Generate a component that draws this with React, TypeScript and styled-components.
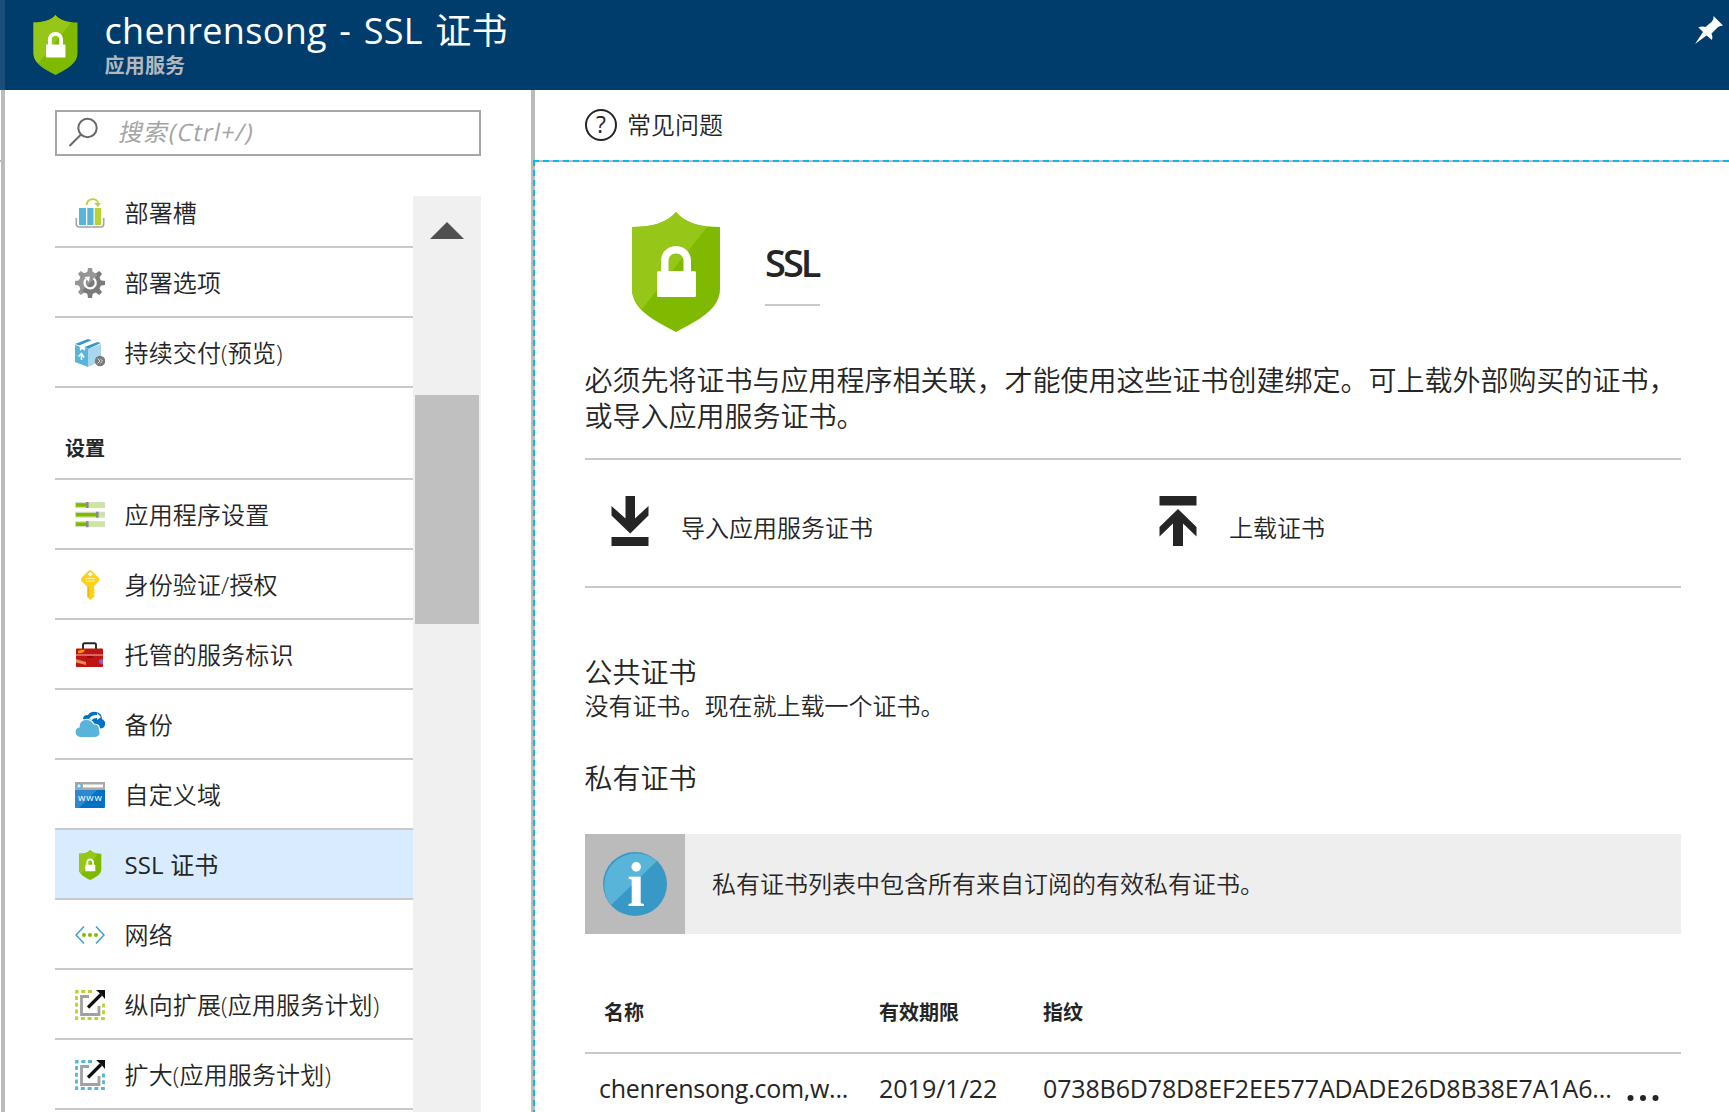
import React from "react";
import styled, { createGlobalStyle, css } from "styled-components";

const line = "#c9c9c9";
const ink = "#252525";

const GlobalStyle = createGlobalStyle`
  * { box-sizing: border-box; }
  html, body { margin: 0; padding: 0; }
  body {
    width: 1729px;
    height: 1112px;
    overflow: hidden;
    background: #fff;
    color: ${ink};
    font-family: "Open Sans", "Noto Sans CJK SC", sans-serif;
    font-size: 24px;
    font-weight: 350;
  }
  svg { display: block; flex: none; }
`;

const Page = styled.div`
  display: flex;
  flex-direction: column;
  width: 1729px;
  height: 1112px;
  overflow: hidden;
`;

const Header = styled.header`
  display: flex;
  flex: none;
  height: 90px;
  padding: 15px 6px 0 28px;
  border-left: 5px solid #1b4f7b;
  background: #003d6c;
`;

const Titles = styled.div`
  flex: 1;
  padding-left: 26.5px;
  margin-top: -15px;
`;

const Title = styled.h1`
  margin: 0;
  padding-top: 7px;
  height: 55px;
  line-height: 48px;
  font-size: 36px;
  font-weight: 400;
  letter-spacing: 0.3px;
  word-spacing: 2.8px;
  color: #fff;
  white-space: nowrap;
`;

const Subtitle = styled.div`
  line-height: 22px;
  font-size: 20px;
  font-weight: 700;
  letter-spacing: 0.2px;
  color: #b4b8bc;
`;

const PinButton = styled.button`
  display: flex;
  height: 30px;
  padding: 1px 0 0;
  border: 0;
  background: none;
`;

const Body = styled.div`
  display: flex;
  flex: 1;
  min-height: 0;
`;

const Edge = styled.div`
  width: 1px;
  height: 2px;
  margin-top: 70px;
  background: #bbb;
`;

const Sidebar = styled.nav`
  display: flex;
  flex-direction: column;
  flex: none;
  width: 534px;
  border-left: 4px solid #bbb;
  border-right: 4px solid #bbb;
  padding: 20px 50px 0 50px;
`;

const Search = styled.label`
  display: flex;
  align-items: center;
  gap: 22px;
  height: 46px;
  padding-left: 11px;
  border: 2px solid #a6a6a6;
`;

const SearchInput = styled.input`
  flex: 1;
  width: 0;
  height: 40px;
  margin-top: -5px;
  padding: 0;
  border: 0;
  outline: 0;
  background: none;
  font: 400 24px/38px "Open Sans", "Noto Sans CJK SC", sans-serif;
  letter-spacing: 1px;
  transform: skewX(-12deg);
  &::placeholder { color: #a4a4a4; opacity: 1; }
`;

const MenuArea = styled.div`
  display: flex;
  flex: 1;
  min-height: 0;
`;

const Menu = styled.ul`
  flex: 1;
  margin: 22px 0 0;
  padding: 0;
  list-style: none;
`;

const MenuItem = styled.li<{ $active?: boolean }>`
  display: flex;
  align-items: center;
  gap: 19.5px;
  height: 70px;
  padding: 2px 0 0 20px;
  border-bottom: 2px solid ${line};
  line-height: 36px;
  letter-spacing: 0.15px;
  white-space: nowrap;
  ${(p) => p.$active && css`
    background: #d9ecff;
    font-weight: 400;
  `}
`;

const MenuHeading = styled.li`
  height: 92px;
  padding: 48px 0 0 10px;
  border-bottom: 2px solid ${line};
  line-height: 26px;
  font-size: 20px;
  font-weight: 700;
`;

const ScrollTrack = styled.div`
  width: 68px;
  margin-top: 40px;
  padding: 26px 2px 0;
  background: #f0f0f0;
`;

const ScrollUp = styled.div`
  width: 0;
  height: 0;
  margin: 0 auto;
  border: 17px solid transparent;
  border-top: 0;
  border-bottom-color: #505050;
`;

const ScrollThumb = styled.div`
  height: 229px;
  margin-top: 156px;
  background: #c0c0c0;
`;

const Main = styled.main`
  display: flex;
  flex-direction: column;
  flex: 1;
  min-width: 0;
`;

const Toolbar = styled.div`
  display: flex;
  align-items: center;
  gap: 10px;
  flex: none;
  height: 70px;
  padding: 0 0 0 50px;
  line-height: 36px;
`;

const Blade = styled.section`
  position: relative;
  flex: 1;
  padding: 50px 48px 0 50px;
  border-top: 2px solid #bbb;
`;

const DashTop = styled.div`
  position: absolute;
  top: -2px;
  left: -2px;
  right: 0;
  height: 2px;
  background: repeating-linear-gradient(90deg, #00bcf2 0 6px, transparent 6px 10px);
`;

const DashLeft = styled.div`
  position: absolute;
  top: -2px;
  left: -2px;
  bottom: 0;
  width: 2px;
  background: repeating-linear-gradient(180deg, #00bcf2 0 6px, transparent 6px 10px);
`;

const Hero = styled.div`
  display: flex;
  gap: 44px;
  height: 120px;
  padding-left: 46px;
`;

const HeroTitle = styled.h2`
  width: 55px;
  height: 94px;
  margin: 0;
  padding-top: 26px;
  border-bottom: 2px solid ${line};
  line-height: 48px;
  font-size: 38px;
  font-weight: 600;
  letter-spacing: -3px;
`;

const Intro = styled.p`
  height: 96px;
  margin: 30px -10px 0 -0.5px;
  line-height: 36px;
  font-size: 28px;
`;

const Actions = styled.div`
  display: grid;
  grid-template-columns: 1fr 1fr;
  height: 130px;
  border: solid ${line};
  border-width: 2px 0;
`;

const Action = styled.div`
  display: flex;
  gap: 32px;
  padding: 36px 0 0 26px;
  line-height: 36px;
`;

const ActionLabel = styled.span`
  margin-top: 14px;
`;

const Group = styled.section<{ $gap: number }>`
  margin-top: ${(p) => p.$gap}px;
`;

const GroupTitle = styled.h3`
  margin: 0 0 0 -0.5px;
  line-height: 36px;
  font-size: 28px;
  font-weight: 350;
`;

const GroupText = styled.p`
  margin: 0 0 0 -0.5px;
  line-height: 32px;
`;

const Notice = styled.div`
  display: flex;
  height: 100px;
  margin-top: 38px;
  background: #eee;
`;

const NoticeIcon = styled.div`
  width: 100px;
  background: #bbb;
`;

const NoticeText = styled.p`
  margin: 0 0 0 27px;
  line-height: 100px;
`;

const Row = styled.div<{ $head?: boolean }>`
  display: grid;
  grid-template-columns: 294px 164px 1fr 54px;
  white-space: nowrap;
  ${(p) =>
    p.$head
      ? css`
          height: 82px;
          margin-top: 38px;
          border-bottom: 2px solid ${line};
          line-height: 82px;
          font-size: 20px;
          font-weight: 700;
        `
      : css`
          height: 68px;
          line-height: 68px;
          font-size: 25px;
          font-weight: 400;
        `}
`;

const Cell = styled.span<{ $indent?: number; $track?: number }>`
  padding-left: ${(p) => p.$indent ?? 0}px;
  letter-spacing: ${(p) => p.$track ?? 0}px;
`;

const MoreButton = styled.button`
  display: flex;
  padding: 40px 0 0;
  border: 0;
  background: none;
`;

const Shield = ({ width, height }: { width: number; height: number }) => (
  <svg width={width} height={height} viewBox="0 0 90 120" preserveAspectRatio="none">
    <path d="M45 0C36 11 20 15 1 15V77C1 97 22 108 45 120C68 108 89 97 89 77V15C70 15 54 11 45 0Z" fill="#7fba00" />
    <path d="M45 0C36 11 20 15 1 15V77C1 85 5 91 11 97L76 15C62 13 51 8 45 0Z" fill="#96c617" />
    <path
      d="M30 59V49C30 40 37 34 45 34S60 40 60 49V59H63.500Q65 59 65 60.500V83.500Q65 85 63.500 85H27.500Q26 85 26 83.500V60.500Q26 59 27.500 59ZM37.500 59H52.500V49C52.500 44 49 41.500 45 41.500S37.500 44 37.500 49Z"
      fill="#fff"
      fillRule="evenodd"
    />
  </svg>
);

const Icon = ({ children }: { children: React.ReactNode }) => (
  <svg width="30" height="30" viewBox="0 0 30 30">
    {children}
  </svg>
);

const SlotsIcon = () => (
  <Icon>
    <path d="M1.300 20V26Q1.300 29 4.500 29H25.500Q28.700 29 28.700 26V20" fill="none" stroke="#a3a3a3" strokeWidth="1.600" />
    <path d="M4 10H11V27H4ZM12.300 10H18.500V27H12.300Z" fill="#59b4d9" />
    <path d="M19.700 10H26V27H19.700Z" fill="#b8d432" />
    <path d="M11.500 7C12.500 -.500 22 -.500 23 5" fill="none" stroke="#b8d432" strokeWidth="1.900" />
    <path d="M19 5L26 5L23 9Z" fill="#b8d432" />
  </Icon>
);

const GearIcon = () => (
  <Icon>
    {[0, 45, 90, 135, 180, 225, 270, 315].map((a) => (
      <path key={a} d="M12 6L13 0H17L18 6Z" fill={a > 30 && a < 215 ? "#7a7a7a" : "#969696"} transform={`rotate(${a} 15 15)`} />
    ))}
    <circle cx="15" cy="15" r="11" fill="#7a7a7a" />
    <path d="M7.200 22.800A11 11 0 0 1 22.800 7.200Z" fill="#969696" />
    <path d="M18.500 10.300A5.600 5.600 0 1 1 11 11" fill="none" stroke="#fff" strokeWidth="2.200" />
    <path d="M9.500 9L14.800 8.500L14 14Z" fill="#fff" />
  </Icon>
);

const PackageIcon = () => (
  <Icon>
    <path d="M0 7L13 11V29L0 24Z" fill="#59b4d9" />
    <path d="M13 11L26 6V23L13 29Z" fill="#a9d8ec" />
    <path d="M0 6L13 1L17 2.300L4.500 7.500Z" fill="#3999c6" />
    <path d="M9 8.500L22 4L26 5L13 11Z" fill="#3999c6" />
    <path d="M4.500 7.500L17 2.300L22 4L9.500 9L10 13L7 11L5 13Z" fill="#fff" />
    <path d="M6.500 22V17M3.500 18.500L6.500 15.500L9 19.500" fill="none" stroke="#fff" strokeWidth="1.600" />
    <circle cx="25" cy="23" r="5.200" fill="#7a7a7a" />
    <path d="M22.500 20.500L25 23L22.500 25.500M25.300 20.800L27.500 23L25.300 25.200" fill="none" stroke="#ddd" strokeWidth="1" />
  </Icon>
);

const SlidersIcon = () => (
  <Icon>
    {[
      [2.5, 12],
      [12.2, 22],
      [21.7, 12],
    ].map(([y, x]) => (
      <g key={y}>
        <rect x=".5" y={y} width="29" height="5" fill="#cde79a" stroke="#d5dcc8" />
        <rect x="1" y={y + 0.7} width={x - 1} height="3.600" fill="#7fba00" />
        <rect x={x - 1} y={y - 0.5} width="2.600" height="6" fill="#8a8a8a" />
      </g>
    ))}
  </Icon>
);

const KeyIcon = () => (
  <Icon>
    <path d="M13.500 .8Q15 -.5 16.500 .8L23.500 7.500Q25.500 9.500 23.500 11.500L19 16V18.500L20 20L18.500 21.500L20 23L18.500 24.500L20 26L15.500 30L12 27V16.500L6.800 11.800Q5 9.500 6.800 7.500Z" fill="#fcd116" />
    <path d="M10.500 8.500H20M10.500 11H20" stroke="#fff3a5" strokeWidth="1.100" />
    <path d="M13.700 17V27" stroke="#e6b800" strokeWidth="1" />
    <circle cx="15.300" cy="4.300" r="2" fill="#fff" />
  </Icon>
);

const ToolboxIcon = () => (
  <Icon>
    <path d="M8 9V5Q8 3.300 9.500 3.300H19.500Q21 3.300 21 5V9" fill="none" stroke="#252525" strokeWidth="1.900" />
    <rect x="1" y="8.500" width="27" height="18.500" rx=".8" fill="#be1414" />
    <path d="M3 11Q6 9 10 10Q8 14 3 13Z" fill="#ff8c00" />
    <path d="M1 19L11 22V25L1 22.500Z" fill="#df8b5b" />
    <path d="M28 19Q23 19 24 22Q25 25 28 24Z" fill="#8661c5" />
    <path d="M1 15H28" stroke="#ee9a9a" strokeWidth="1.200" />
    <path d="M12 16H18V18H12Z" fill="#8e0c0c" />
  </Icon>
);

const CloudsIcon = () => (
  <Icon>
    <path d="M8 9Q8 5 13 5Q16 1 21 2Q27 3 27 9Q31 11 30 15Q29 19 24 18.500Z" fill="#0072c6" />
    <path d="M14 9Q16 5 22 5V3L26 7L22 10V8Q18 8 17 10Z" fill="#fff" />
    <path d="M5.500 27.500Q0 27 0 22Q0 18 4 17Q4 10 10.500 9.500Q16 9 19 14Q25 14 24.500 20Q27 27 20 27.500Z" fill="#59b4d9" stroke="#fff" strokeWidth="1.200" />
  </Icon>
);

const DomainIcon = () => (
  <Icon>
    <rect y="2" width="30" height="26" rx="1" fill="#0072c6" />
    <path d="M0 10H22L4 28H1Q0 28 0 27Z" fill="#2d8ad0" />
    <path d="M0 10V3Q0 2 1 2H29Q30 2 30 3V10Z" fill="#a9a9a9" />
    <rect x="8" y="4.500" width="20" height="3" fill="#fff" />
    <circle cx="4" cy="6" r="2.300" fill="#d8eef8" stroke="#3fa7dd" strokeWidth="1" />
    <text x="15" y="21" fontFamily="Open Sans" fontSize="9.500" fontWeight="500" textAnchor="middle" textLength="24" fill="#fff">www</text>
  </Icon>
);

const NetworkIcon = () => (
  <Icon>
    <path d="M9 6.500L1 15L9 23.500M21 6.500L29 15L21 23.500" fill="none" stroke="#3d9fd3" strokeWidth="1.500" />
    <circle cx="9" cy="15" r="2" fill="#7fba00" />
    <circle cx="15" cy="15" r="2" fill="#7fba00" />
    <circle cx="21" cy="15" r="2" fill="#7fba00" />
  </Icon>
);

const ScaleIcon = ({ color }: { color: string }) => (
  <Icon>
    <path d="M17 1.500H1.500V28.500H28.500V12" fill="none" stroke={color} strokeWidth="2.800" strokeDasharray="4 2.700" />
    <path d="M14 6.500H6.500V24.500H24V16" fill="none" stroke="#a0a1a2" strokeWidth="2.800" />
    <path d="M13 17.500L26 4.500" stroke="#111" strokeWidth="3.200" />
    <path d="M21 0H30V9L27 5.500L24.500 3Z" fill="#111" />
  </Icon>
);

const SmallShield = () => (
  <Icon>
    <g transform="translate(3.700 0)">
      <Shield width={23} height={30} />
    </g>
  </Icon>
);

const SearchIcon = () => (
  <svg width="30" height="32" viewBox="0 0 30 32" fill="none" stroke="#686868" strokeWidth="2">
    <circle cx="19.500" cy="11" r="9.200" />
    <path d="M13 17.500L1.500 29" />
  </svg>
);

const HelpIcon = () => (
  <svg width="32" height="32" viewBox="0 0 32 32">
    <circle cx="16" cy="16" r="15" fill="none" stroke={ink} strokeWidth="2" />
    <text x="16" y="24" fontFamily="Open Sans" fontSize="23" fontWeight="500" textAnchor="middle" fill={ink}>?</text>
  </svg>
);

const PinIcon = () => (
  <svg width="28" height="28" viewBox="0 0 28 28">
    <path d="M18.500 0L28 9.500Q24 10 22.500 11.500L16.500 17.500Q18 21 17 24L11.500 19.500L0 28L8 16L3.300 11.300Q7 10 10.500 11L17 5.500Q19 3.500 18.500 0Z" fill="#fff" />
  </svg>
);

const DownloadIcon = () => (
  <svg width="38" height="50" viewBox="0 0 38 50" fill={ink}>
    <path d="M14.500 0H24V22.500L37.500 10V19.500L19.200 37.500L.5 19.500V10L14.500 22.500ZM.5 41H37.500V50H.5Z" />
  </svg>
);

const UploadIcon = () => (
  <svg width="38" height="50" viewBox="0 0 38 50" fill={ink}>
    <path d="M.5 0H37.500V9.500H.5ZM19 13L37.500 31V40.500L24 27.500V50H14V27.500L.5 40.500V31Z" />
  </svg>
);

const InfoIcon = () => (
  <svg width="100" height="100" viewBox="-18 -18 100 100">
    <circle cx="32" cy="32" r="32" fill="#3999c6" />
    <path d="M8 53A32 32 0 0 1 54 9Z" fill="#59b4d9" />
    <text x="33" y="54" fontFamily="Liberation Serif" fontSize="63" fontWeight="700" textAnchor="middle" fill="#fff">i</text>
  </svg>
);

const MoreIcon = () => (
  <svg width="32" height="8" viewBox="0 0 32 8" fill={ink}>
    <circle cx="3.500" cy="4" r="3" />
    <circle cx="16" cy="4" r="3" />
    <circle cx="28.500" cy="4" r="3" />
  </svg>
);

const deployment = [
  { label: "部署槽", icon: <SlotsIcon /> },
  { label: "部署选项", icon: <GearIcon /> },
  { label: "持续交付(预览)", icon: <PackageIcon /> },
];

const settings = [
  { label: "应用程序设置", icon: <SlidersIcon /> },
  { label: "身份验证/授权", icon: <KeyIcon /> },
  { label: "托管的服务标识", icon: <ToolboxIcon /> },
  { label: "备份", icon: <CloudsIcon /> },
  { label: "自定义域", icon: <DomainIcon /> },
  { label: "SSL 证书", icon: <SmallShield />, active: true },
  { label: "网络", icon: <NetworkIcon /> },
  { label: "纵向扩展(应用服务计划)", icon: <ScaleIcon color="#b8d432" /> },
  { label: "扩大(应用服务计划)", icon: <ScaleIcon color="#59b4d9" /> },
];

export default function App() {
  return (
    <Page>
      <GlobalStyle />
      <Header>
        <Shield width={45} height={60} />
        <Titles>
          <Title>chenrensong - SSL 证书</Title>
          <Subtitle>应用服务</Subtitle>
        </Titles>
        <PinButton aria-label="pin">
          <PinIcon />
        </PinButton>
      </Header>
      <Body>
        <Edge />
        <Sidebar>
          <Search>
            <SearchIcon />
            <SearchInput placeholder="搜索(Ctrl+/)" />
          </Search>
          <MenuArea>
            <Menu>
              {deployment.map((item) => (
                <MenuItem key={item.label}>
                  {item.icon}
                  {item.label}
                </MenuItem>
              ))}
              <MenuHeading>设置</MenuHeading>
              {settings.map((item) => (
                <MenuItem key={item.label} $active={item.active}>
                  {item.icon}
                  {item.label}
                </MenuItem>
              ))}
            </Menu>
            <ScrollTrack>
              <ScrollUp />
              <ScrollThumb />
            </ScrollTrack>
          </MenuArea>
        </Sidebar>
        <Main>
          <Toolbar>
            <HelpIcon />
            常见问题
          </Toolbar>
          <Blade>
            <DashTop />
            <DashLeft />
            <Hero>
              <Shield width={90} height={120} />
              <HeroTitle>SSL</HeroTitle>
            </Hero>
            <Intro>必须先将证书与应用程序相关联，才能使用这些证书创建绑定。可上载外部购买的证书，或导入应用服务证书。</Intro>
            <Actions>
              <Action>
                <DownloadIcon />
                <ActionLabel>导入应用服务证书</ActionLabel>
              </Action>
              <Action>
                <UploadIcon />
                <ActionLabel>上载证书</ActionLabel>
              </Action>
            </Actions>
            <Group $gap={66}>
              <GroupTitle>公共证书</GroupTitle>
              <GroupText>没有证书。现在就上载一个证书。</GroupText>
            </Group>
            <Group $gap={38}>
              <GroupTitle>私有证书</GroupTitle>
              <Notice>
                <NoticeIcon>
                  <InfoIcon />
                </NoticeIcon>
                <NoticeText>私有证书列表中包含所有来自订阅的有效私有证书。</NoticeText>
              </Notice>
              <Row $head>
                <Cell $indent={19}>名称</Cell>
                <Cell>有效期限</Cell>
                <Cell>指纹</Cell>
              </Row>
              <Row>
                <Cell $indent={14} $track={-0.27}>chenrensong.com,w...</Cell>
                <Cell>2019/1/22</Cell>
                <Cell $track={-0.14}>0738B6D78D8EF2EE577ADADE26D8B38E7A1A6...</Cell>
                <MoreButton aria-label="more">
                  <MoreIcon />
                </MoreButton>
              </Row>
            </Group>
          </Blade>
        </Main>
      </Body>
    </Page>
  );
}
